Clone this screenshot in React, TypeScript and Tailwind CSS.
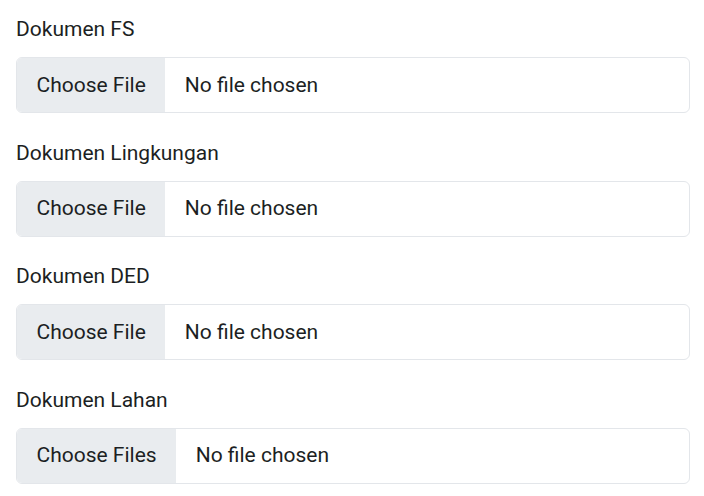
const fields = [
  { label: "Dokumen FS", button: "Choose File" },
  { label: "Dokumen Lingkungan", button: "Choose File" },
  { label: "Dokumen DED", button: "Choose File" },
  { label: "Dokumen Lahan", button: "Choose Files" },
];

const FileField = ({ label, button }: { label: string; button: string }) => {
  return (
    <div className="mb-[25.5px]">
      <label className="block text-[21px] leading-[28px] mb-[14px] text-[#1c1f23]">
        {label}
      </label>
      <div className="flex items-stretch h-[56px] border border-[#e3e6ea] rounded-[6px] overflow-hidden bg-white text-[21px] text-[#1c1f23]">
        <div className="flex items-center px-[19.5px] pt-[1px] bg-[#e9ecef]">{button}</div>
        <div className="flex items-center pl-[19.5px] pt-[1px]">No file chosen</div>
      </div>
    </div>
  );
};

export default function App() {
  return (
    <div
      className="w-[704px] h-[496px] overflow-hidden bg-white pl-4 pr-[14px] pt-[15px]"
      style={{ fontFamily: "Roboto, 'Liberation Sans', sans-serif" }}
    >
      {fields.map((f) => (
        <FileField key={f.label} label={f.label} button={f.button} />
      ))}
    </div>
  );
}
